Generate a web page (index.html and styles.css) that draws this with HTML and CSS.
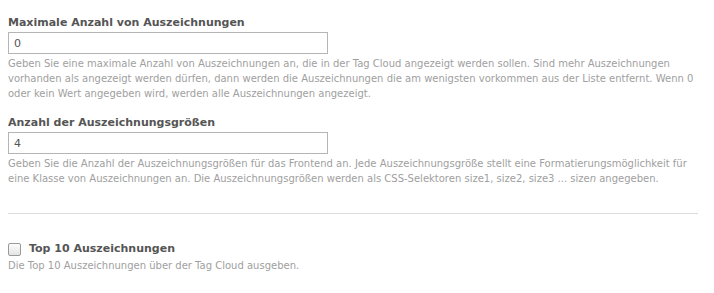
FILE: index.html
```html
<!DOCTYPE html>
<html lang="de">
<head>
<meta charset="utf-8">
<link rel="stylesheet" href="styles.css">
</head>
<body>
<div class="form">
  <div class="field">
    <label class="label" for="max">Maximale Anzahl von Auszeichnungen</label>
    <input class="text" id="max" type="text" value="0">
    <div class="desc">Geben Sie eine maximale Anzahl von Auszeichnungen an, die in der Tag Cloud angezeigt werden sollen. Sind mehr Auszeichnungen vorhanden als angezeigt werden dürfen, dann werden die Auszeichnungen die am wenigsten vorkommen aus der Liste entfernt. Wenn 0 oder kein Wert angegeben wird, werden alle Auszeichnungen angezeigt.</div>
  </div>
  <div class="field">
    <label class="label" for="sizes">Anzahl der Auszeichnungsgrößen</label>
    <input class="text" id="sizes" type="text" value="4">
    <div class="desc">Geben Sie die Anzahl der Auszeichnungsgrößen für das Frontend an. Jede Auszeichnungsgröße stellt eine Formatierungsmöglichkeit für eine Klasse von Auszeichnungen an. Die Auszeichnungsgrößen werden als CSS-Selektoren size1, size2, size3 ... size<em>n</em> angegeben.</div>
  </div>
  <hr class="sep">
  <div class="field check">
    <div class="check-row">
      <span class="box"></span>
      <label class="label">Top 10 Auszeichnungen</label>
    </div>
    <div class="desc">Die Top 10 Auszeichnungen über der Tag Cloud ausgeben.</div>
  </div>
</div>
</body>
</html>
```
FILE: styles.css
```css
html, body {
  margin: 0;
  background: #fff;
}
body {
  padding: 8px;
  font-family: "DejaVu Sans", Verdana, sans-serif;
}
.form {
  width: 690px;
}
.field {
  display: flex;
  flex-direction: column;
  align-items: flex-start;
  padding-top: 7px;
  margin-bottom: 7px;
}
.label {
  font-size: 11px;
  font-weight: bold;
  color: #555;
  line-height: 16px;
  margin-bottom: 1px;
}
.text {
  box-sizing: border-box;
  width: 320px;
  height: 22px;
  margin: 0;
  padding: 0 5px;
  border: 1px solid #b5b5b5;
  font-family: "DejaVu Sans", Verdana, sans-serif;
  font-size: 11px;
  color: #555;
  outline: none;
}
.desc {
  font-size: 10px;
  line-height: 15px;
  color: #a0a0a0;
  margin-top: 2px;
}
.sep {
  border: 0;
  border-top: 1px solid #dcdcdc;
  margin: 27px 0 0 0;
  height: 0;
}
.check {
  padding-top: 27px;
}
.check-row {
  display: flex;
  align-items: center;
  gap: 8px;
}
.box {
  width: 11px;
  height: 11px;
  border: 1px solid #999;
  border-radius: 2px;
  background: linear-gradient(#fdfdfd, #e4e4e4);
}
.check .desc {
  margin-top: 0;
}
```
